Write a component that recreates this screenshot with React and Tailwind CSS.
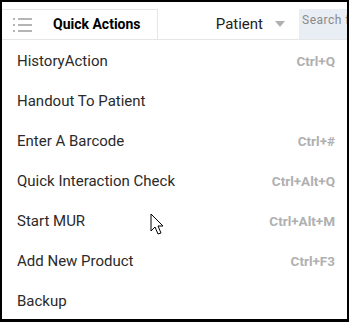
import React from 'react';

const actions = [
  { label: 'HistoryAction', key: 'Ctrl+Q' },
  { label: 'Handout To Patient', key: '' },
  { label: 'Enter A Barcode', key: 'Ctrl+#' },
  { label: 'Quick Interaction Check', key: 'Ctrl+Alt+Q' },
  { label: 'Start MUR', key: 'Ctrl+Alt+M' },
  { label: 'Add New Product', key: 'Ctrl+F3' },
  { label: 'Backup', key: '' },
];

const ListIcon = () => (
  <svg width="20" height="16" viewBox="0 0 20 16" className="text-[#b5b5b5]">
    <rect x="0" y="1" width="2" height="2" fill="currentColor" />
    <rect x="5" y="1" width="14" height="2" fill="currentColor" />
    <rect x="0" y="7" width="2" height="2" fill="currentColor" />
    <rect x="5" y="7" width="14" height="2" fill="currentColor" />
    <rect x="0" y="13" width="2" height="2" fill="currentColor" />
    <rect x="5" y="13" width="14" height="2" fill="currentColor" />
  </svg>
);

const Cursor = () => (
  <svg width="16" height="24" viewBox="0 0 16 24" className="absolute left-[148px] top-[211px]">
    <path d="M1 1 L1 18 L5 14 L8 21 L11 20 L8 13 L13 13 Z" fill="white" stroke="black" strokeWidth="1" strokeLinejoin="miter" />
  </svg>
);

export default function App() {
  return (
    <div className="relative w-[349px] h-[322px] border-2 border-b-[3px] border-black bg-white overflow-hidden font-['Roboto',sans-serif]">
      <div className="flex items-end h-[38px] border-b border-[#e6e6e6]">
        <div className="flex items-center h-[30px] w-[156px] border-t border-r border-[#e6e6e6]">
          <div className="ml-[11px]"><ListIcon /></div>
          <span className="ml-[20px] text-[14px] font-bold text-black">Quick Actions</span>
        </div>
        <div className="flex-1 flex items-center h-[30px] justify-end">
          <span className="text-[15px] text-[#222]">Patient</span>
          <svg width="10" height="8" viewBox="0 0 10 8" className="ml-[12px] mr-[14px]">
            <path d="M0 1 L10 1 L5 7 Z" fill="#b0b0b0" />
          </svg>
          <div className="h-[30px] w-[48px] bg-[#e9edf4] overflow-hidden pl-[3px]">
            <span className="block text-[12px] leading-[22px] text-[#8a8a8a] whitespace-nowrap tracking-[0.5px]">Search for</span>
          </div>
        </div>
      </div>
      <div className="flex flex-col pt-[1px]">
        {actions.map((a) => (
          <div key={a.label} className="flex items-center justify-between h-[40px] pl-[15px] pr-[12px]">
            <span className="text-[15px] text-[#2a2a2a]">{a.label}</span>
            <span className="text-[13.5px] font-bold text-[#b0b0b0]">{a.key}</span>
          </div>
        ))}
      </div>
      <Cursor />
    </div>
  );
}
